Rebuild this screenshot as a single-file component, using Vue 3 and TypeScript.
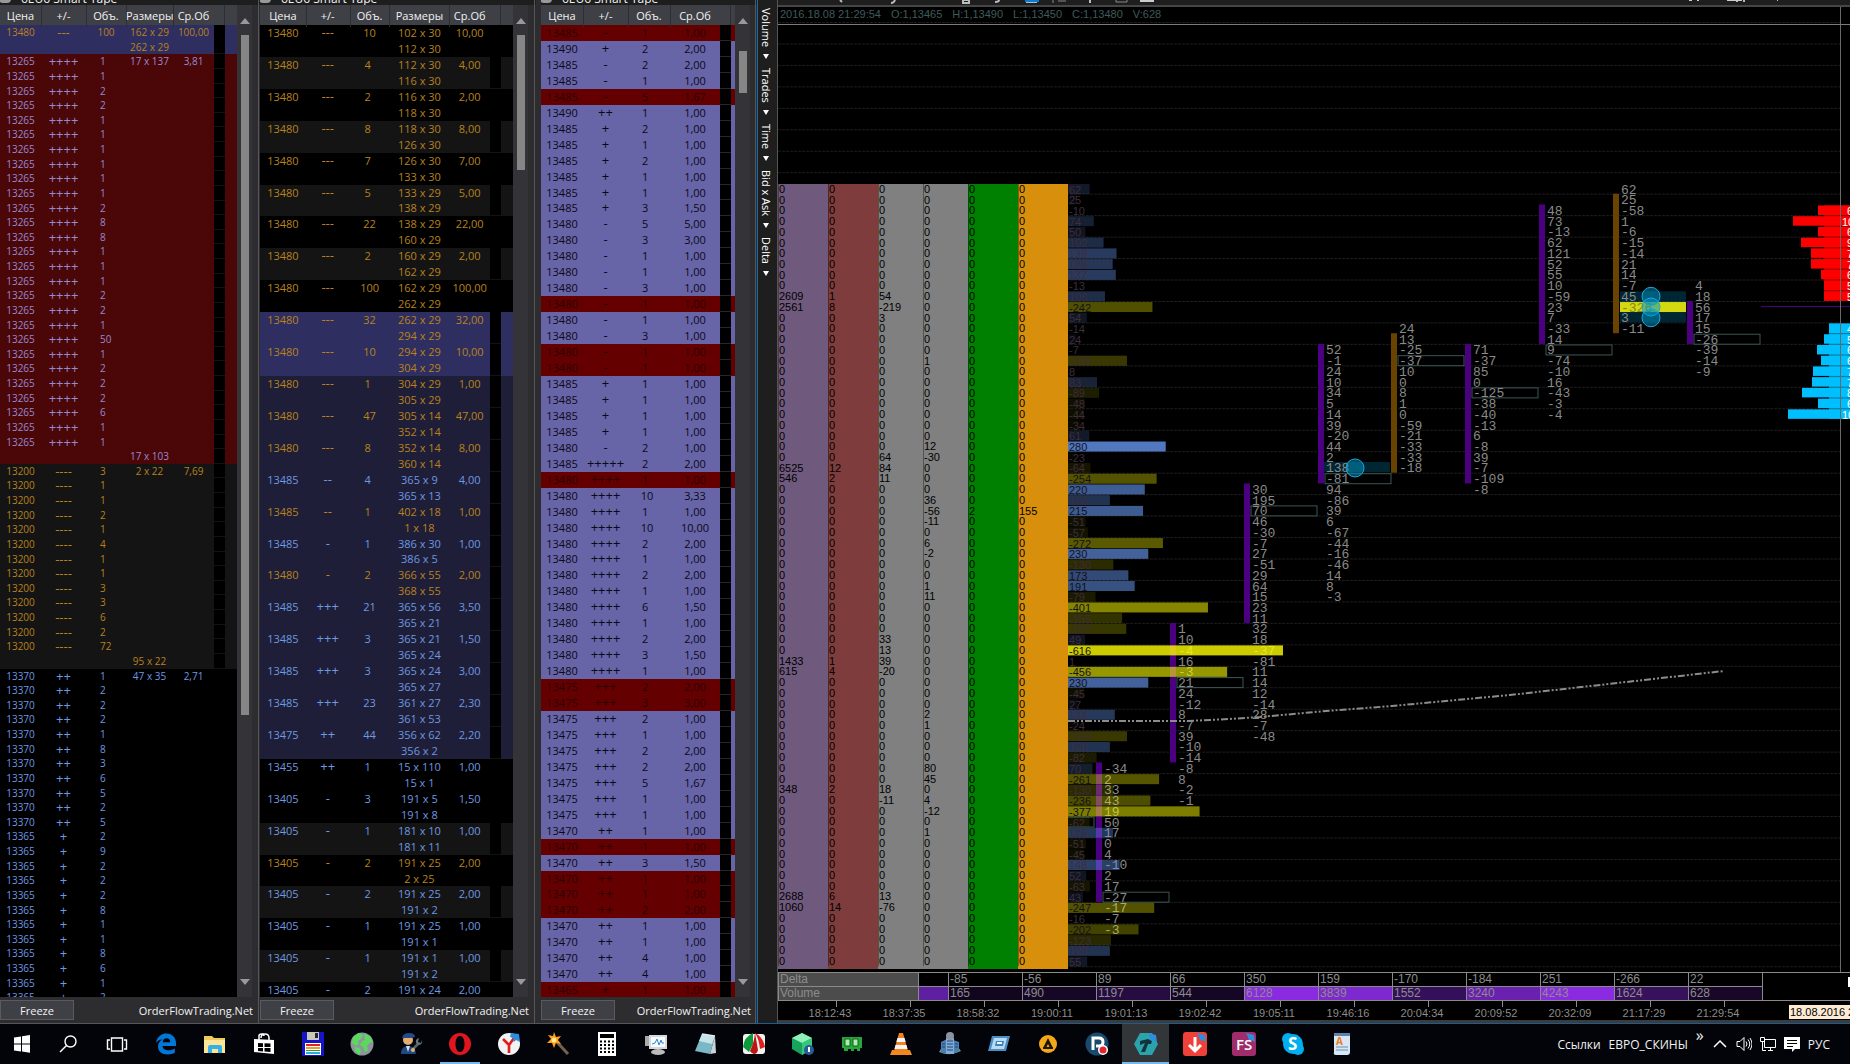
<script setup lang="ts">
interface Row { price: string; sign: string; vol: string; size: string; avg: string; tone: string; fill: string }
interface Tape { id: string; heads: string[]; sizes: boolean; rows: Row[]; thumbTop: number; thumbHeight: number }

const title = '6EU6 Smart Tape'

function block(price: string, sign: string, vols: string, first: string, avg: string, last: string, tone: string, fill: string): Row[] {
  const rows = vols.split(' ').map((vol, i) => ({
    price, sign, vol, size: i === 0 ? first : '', avg: i === 0 ? avg : '', tone, fill,
  }))
  if (last) rows.push({ price: '', sign: '', vol: '', size: last, avg: '', tone, fill })
  return rows
}

const groupedRows: Row[] = [
  { price: '13480', sign: '---', vol: '100', size: '162 x 29\n262 x 29', avg: '100,00', tone: 'sell', fill: 'navy' },
  ...block('13265', '++++', '1 1 2 2 1 1 1 1 1 1 2 8 8 1 1 1 2 2 1 50 1 2 2 2 6 1 1', '17 x 137', '3,81', '17 x 103', 'violet', 'maroon'),
  ...block('13200', '----', '3 1 1 2 1 4 1 1 3 3 6 2 72', '2 x 22', '7,69', '95 x 22', 'sell', 'dark'),
  ...block('13370', '++', '1 2 2 2 1 8 3 6 5 2 5', '47 x 35', '2,71', '', 'buy', 'black'),
  ...block('13365', '+', '2 9 2 2 2 8 1 1 8 6 1 2', '', '', '', 'buy', 'black'),
]

const pairedSource = `13480|---|10|102 x 30|112 x 30|10,00|sell|black
13480|---|4|112 x 30|116 x 30|4,00|sell|dark
13480|---|2|116 x 30|118 x 30|2,00|sell|black
13480|---|8|118 x 30|126 x 30|8,00|sell|dark
13480|---|7|126 x 30|133 x 30|7,00|sell|black
13480|---|5|133 x 29|138 x 29|5,00|sell|dark
13480|---|22|138 x 29|160 x 29|22,00|sell|black
13480|---|2|160 x 29|162 x 29|2,00|sell|dark
13480|---|100|162 x 29|262 x 29|100,00|sell|black
13480|---|32|262 x 29|294 x 29|32,00|sell|navy
13480|---|10|294 x 29|304 x 29|10,00|sell|navy
13480|---|1|304 x 29|305 x 29|1,00|sell|indigo
13480|---|47|305 x 14|352 x 14|47,00|sell|indigo
13480|---|8|352 x 14|360 x 14|8,00|sell|indigo
13485|--|4|365 x 9|365 x 13|4,00|buy|indigo
13485|--|1|402 x 18|1 x 18|1,00|sell|indigo
13485|-|1|386 x 30|386 x 5|1,00|buy|indigo
13480|-|2|366 x 55|368 x 55|2,00|sell|indigo
13485|+++|21|365 x 56|365 x 21|3,50|buy|indigo
13485|+++|3|365 x 21|365 x 24|1,50|buy|indigo
13485|+++|3|365 x 24|365 x 27|3,00|buy|indigo
13485|+++|23|361 x 27|361 x 53|2,30|buy|indigo
13475|++|44|356 x 62|356 x 2|2,20|buy|indigo
13455|++|1|15 x 110|15 x 1|1,00|buy|black
13405|-|3|191 x 5|191 x 8|1,50|buy|black
13405|-|1|181 x 10|181 x 11|1,00|buy|dark
13405|-|2|191 x 25|2 x 25|2,00|sell|black
13405|-|2|191 x 25|191 x 2|2,00|buy|dark
13405|-|1|191 x 25|191 x 1|1,00|buy|black
13405|-|1|191 x 1|191 x 2|1,00|buy|dark
13405|-|2|191 x 24||2,00|buy|black`

const pairedRows: Row[] = pairedSource.split('\n').map((line) => {
  const [price, sign, vol, a, b, avg, tone, fill] = line.split('|')
  return { price, sign, vol, size: b ? a + '\n' + b : a, avg, tone, fill }
})

// price, sign, volume, average; a trailing r marks a sell print
const singleSource = `13485 - 1 1,00 r;13490 + 2 2,00;13485 - 2 2,00;13485 - 1 1,00;13485 - 5 1,67 r;13490 ++ 1 1,00;13485 + 2 1,00;13485 + 1 1,00;13485 + 2 1,00;13485 + 1 1,00;13485 + 1 1,00;13485 + 3 1,50;13480 - 5 5,00;13480 - 3 3,00;13480 - 1 1,00;13480 - 1 1,00;13480 - 3 1,00;13480 - 1 1,00 r;13480 - 1 1,00;13480 - 3 1,00;13480 - 1 1,00 r;13480 - 1 1,00 r;13485 + 1 1,00;13485 + 1 1,00;13485 + 1 1,00;13485 + 1 1,00;13480 - 2 1,00;13485 +++++ 2 2,00;13480 ++++ 1 1,00 r;13480 ++++ 10 3,33;13480 ++++ 1 1,00;13480 ++++ 10 10,00;13480 ++++ 2 2,00;13480 ++++ 1 1,00;13480 ++++ 2 2,00;13480 ++++ 1 1,00;13480 ++++ 6 1,50;13480 ++++ 1 1,00;13480 ++++ 2 2,00;13480 ++++ 3 1,50;13480 ++++ 1 1,00;13475 +++ 2 2,00 r;13475 +++ 3 3,00 r;13475 +++ 2 1,00;13475 +++ 1 1,00;13475 +++ 2 2,00;13475 +++ 2 2,00;13475 +++ 5 1,67;13475 +++ 1 1,00;13475 +++ 1 1,00;13470 ++ 1 1,00;13470 ++ 1 1,00 r;13470 ++ 3 1,50;13470 ++ 1 1,00 r;13470 ++ 1 1,00 r;13470 ++ 2 2,00 r;13470 ++ 1 1,00;13470 ++ 1 1,00;13470 ++ 4 1,00;13470 ++ 4 1,00;13465 + 1 1,00 r`

const singleRows: Row[] = singleSource.split(';').map((entry) => {
  const [price, sign, vol, avg, mark] = entry.split(' ')
  return { price, sign, vol, size: '', avg, tone: mark ? 'ember' : 'ink', fill: mark ? 'red' : 'lilac' }
})

const tapes: Tape[] = [
  { id: 'grouped', heads: ['Цена', '+/-', 'Объ.', 'Размеры', 'Ср.Об'], sizes: true, rows: groupedRows, thumbTop: 0, thumbHeight: 73 },
  { id: 'paired', heads: ['Цена', '+/-', 'Объ.', 'Размеры', 'Ср.Об'], sizes: true, rows: pairedRows, thumbTop: 0, thumbHeight: 14.5 },
  { id: 'single', heads: ['Цена', '+/-', 'Объ.', 'Ср.Об'], sizes: false, rows: singleRows, thumbTop: 1.7, thumbHeight: 4.5 },
]

const menus = ['Volume', 'Trades', 'Time', 'Bid x Ask', 'Delta']
const quote = ['2016.18.08 21:29:54', 'O:1,13465', 'H:1,13490', 'L:1,13450', 'C:1,13480', 'V:628']

// Price ladder: 73 levels, drawn from the top of the plot
const LEVELS = 73
const PITCH = 10.73
const TOP = 177
const levelY = (level: number) => TOP + level * PITCH
const baseline = (level: number) => levelY(level) + 9.5

const ladder: Record<number, string>[] = [
  { 10: '2609', 11: '2561', 26: '6525', 27: '546', 44: '1433', 45: '615', 56: '348', 66: '2688', 67: '1060' },
  { 10: '1', 11: '8', 26: '12', 27: '2', 44: '1', 45: '4', 56: '2', 66: '6', 67: '14' },
  { 10: '54', 11: '-219', 12: '3', 25: '64', 26: '84', 27: '11', 42: '33', 43: '13', 44: '39', 45: '-20', 56: '18', 57: '-11', 66: '13', 67: '-76' },
  { 16: '1', 24: '12', 25: '-30', 29: '36', 30: '-56', 31: '-11', 33: '6', 34: '-2', 37: '1', 38: '11', 49: '2', 50: '1', 54: '80', 55: '45', 57: '4', 58: '-12', 60: '1' },
  { 30: '2' },
  { 30: '155' },
]
const levels = Array.from({ length: LEVELS }, (_, i) => i)
const gridLines = Array.from({ length: 45 }, (_, i) => 15.5 + i * PITCH * 2)

const profile = [
  62, 25, -10, 74, 50, 102, 139, 128, 137, -13, 106, -242, 54, -14, 24, -7, -169, 8, 83, -89, -48, -44, -34, 61, 280,
  -23, -64, -254, 220, 120, 215, -51, -57, -272, 230, -130, 173, 191, -79, -401, -155, -167, 49, -616, 1, -456, 230,
  -45, 27, 134, -24, -169, 120, -82, 70, -261, -130, -236, -377, -62, 129, -51, -45, 148, 52, -63, 43, -247, -16,
  -202, -123, 120, 55,
]
const barOpacity = (v: number) => (v > 0 ? v / 280 : -v / 616) * 0.8
const barInk = (v: number) => (Math.abs(v) >= 170 ? '#14101a' : '#3f2c3c')

interface Candle { x: number; from: number; count: number; up: boolean; start: number; box: number; cells: number[] }
const candles: Candle[] = [
  { x: 318, from: 54, count: 13, up: false, start: 54, box: 66, cells: [-34, 2, 33, 43, 19, 50, 17, 0, 4, -10, 2, 17, -27, -17, -7, -3] },
  { x: 392, from: 41, count: 13, up: false, start: 41, box: 46, cells: [1, 10, -4, 16, -3, 21, 24, -12, 8, -7, 39, -10, -14, -8, 8, -2, -1] },
  { x: 466, from: 28, count: 13, up: false, start: 28, box: 30, cells: [30, 195, 70, 46, -30, -7, 27, -51, 29, 64, 15, 23, 11, 32, 18, -37, -81, 11, 14, 12, -14, 28, -7, -48] },
  { x: 540, from: 15, count: 13, up: false, start: 15, box: 27, cells: [52, -1, 24, 10, 34, 5, 14, 39, -20, 44, 2, 138, -81, 94, -86, 39, 6, -67, -44, -16, -46, 14, 8, -3] },
  { x: 613, from: 14, count: 13, up: true, start: 13, box: 16, cells: [24, 13, -25, -37, 10, 0, 8, 1, 0, -59, -21, -33, -33, -18] },
  { x: 687, from: 15, count: 13, up: false, start: 15, box: 19, cells: [71, -37, 85, 0, -125, -38, -40, -13, 6, -8, 39, -7, -109, -8] },
  { x: 761, from: 2, count: 13, up: false, start: 2, box: 15, cells: [48, 73, -13, 62, 121, 52, 55, 10, -59, 23, 7, -33, 14, 9, -74, -10, 16, -43, -3, -4] },
  { x: 835, from: 1, count: 13, up: true, start: 0, box: -1, cells: [62, 25, -58, 1, -6, -15, -14, 21, 14, -7, 45, -326, 3, -11] },
  { x: 909, from: 11, count: 4, up: false, start: 9, box: 14, cells: [4, 18, 56, 17, 15, -26, -39, -14, -9] },
]

const asks = [[1040, '6'], [1015, '10'], [1040, '6'], [1023, '9'], [1033, '7'], [1033, '7'], [1043, '6'], [1046, '5'], [1046, '5']] as [number, string][]
const bids = [[1051, '4'], [1046, '5'], [1039, '6'], [1043, '6'], [1035, '7'], [1034, '7'], [1024, '8'], [1040, '6'], [1010, '10']] as [number, string][]
const depthX = (label: string) => (label.length > 1 ? 1064 : 1069)

const deltas = ['', '-85', '-56', '89', '66', '350', '159', '-170', '-184', '251', '-266', '22']
const volumes = ['', '165', '490', '1197', '544', '6128', '3839', '1552', '3240', '4243', '1624', '628']
const heat = ['#5e1fa0', '#12051e', '#170726', '#260c40', '#160626', '#8a2be2', '#7e28cf', '#35105a', '#6a21b0', '#8a2be2', '#37115c', '#180728']
const times = ['18:12:43', '18:37:35', '18:58:32', '19:00:11', '19:01:13', '19:02:42', '19:05:11', '19:46:16', '20:04:34', '20:09:52', '20:32:09', '21:17:29', '21:29:54']
</script>

<template>
  <div class="desktop">
    <main class="workspace">
      <section v-for="tape in tapes" :key="tape.id" class="tape" :class="tape.id">
        <header class="tape-title">
          <svg width="14" height="14" viewBox="0 0 14 14" aria-hidden="true"><rect x="1" y="2" width="12" height="11" rx="4" fill="#999" /></svg>
          <span>{{ title }}</span>
        </header>
        <div class="tape-main">
          <table>
            <thead>
              <tr>
                <th v-for="(head, i) in tape.heads" :key="head" scope="col" :class="{ wide: i === tape.heads.length - 1 }">{{ head }}</th>
                <td class="rest"></td>
              </tr>
            </thead>
            <tbody>
              <tr v-for="(row, i) in tape.rows" :key="i" :class="[row.fill, row.tone]">
                <td>{{ row.price }}</td>
                <td class="sign">{{ row.sign }}</td>
                <td class="vol"><span>{{ row.vol }}</span></td>
                <td v-if="tape.sizes" class="size">{{ row.size }}</td>
                <td>{{ row.avg }}</td>
                <td class="strip"></td>
                <td></td>
              </tr>
            </tbody>
          </table>
          <div class="scrollbar">
            <svg width="10" height="6" viewBox="0 0 10 6" aria-hidden="true"><path d="M0 6 5 0l5 6z" fill="#999" /></svg>
            <div class="track">
              <div class="thumb" :style="{ marginTop: tape.thumbTop + 'cqh', height: tape.thumbHeight + '%' }"></div>
            </div>
            <svg width="10" height="6" viewBox="0 0 10 6" aria-hidden="true"><path d="M0 0h10L5 6z" fill="#999" /></svg>
          </div>
        </div>
        <footer class="tape-foot">
          <button type="button">Freeze</button>
          <span>OrderFlowTrading.Net</span>
        </footer>
      </section>

      <section class="chart">
        <nav class="side">
          <button v-for="menu in menus" :key="menu" type="button">
            {{ menu }}
            <svg width="6" height="6" viewBox="0 0 6 6" aria-hidden="true"><path d="M0 1h6L3 6z" fill="#fff" /></svg>
          </button>
        </nav>
        <div class="view">
          <div class="toolbar">
            <svg width="1000" height="5" viewBox="0 0 1000 5" aria-hidden="true">
              <path d="M62 0l2 2M113 3q3 0 4-3M185 0h6v3h-6zM217 2q4 0 4-2M249 0v2h10M312 0v3M959 0v2M966 0v2M1000 0v1" fill="none" stroke="#bbb" stroke-width="2" />
              <rect x="247" y="0" width="14" height="2" fill="#0a7cd4" />
              <path d="M275 0v3M280 1h8M338 0v2h11V0" fill="none" stroke="#888" />
              <rect x="362" y="0" width="14" height="2" fill="#ccc" />
              <path d="M949 0h15v1h-15zM911 0h3v1h-3zM919 0h2v1h-2z" fill="#ccc" />
            </svg>
          </div>
          <div class="plot">
            <svg class="canvas" width="100%" height="100%" role="img" aria-label="Delta chart">
              <line v-for="y in gridLines" :key="y" x1="0" x2="1062" :y1="y" :y2="y" class="grid" />
              <rect x="546" :y="levelY(26) - 1" width="66" height="10" class="glow" />
              <rect x="842" :y="levelY(10)" width="66" height="31" class="glow" />
              <rect x="842" :y="levelY(11)" width="66" height="10" fill="#d4d810" />
              <rect x="250" :y="levelY(59)" width="66" height="10" class="poc" />
              <g v-for="c in candles" :key="c.x">
                <rect :x="c.x" :y="levelY(c.from) - 1" width="6" :height="c.count * PITCH" :fill="c.up ? '#6b4300' : '#4b0082'" />
                <rect v-if="c.box >= 0" :x="c.x + 7" :y="levelY(c.box)" width="66" height="10" class="poc" />
                <text v-for="(v, i) in c.cells" :key="i" :x="c.x + 8" :y="baseline(c.start + i)" class="cell" :class="{ dim: v === -326 }">{{ v }}</text>
              </g>
              <circle cx="577" :cy="levelY(26) + 5" r="9" class="spot" />
              <circle v-for="n in [10, 11, 12]" :key="n" cx="873" :cy="levelY(n) + 5" r="9" class="spot" />
              <g v-for="(v, i) in profile" :key="i">
                <rect x="290" :y="levelY(i)" :width="Math.abs(v) * 0.349" height="10" :fill="v > 0 ? '#6595ed' : '#ffff00'" :fill-opacity="barOpacity(v)" />
                <text x="291" :y="baseline(i)" class="profile" :fill="barInk(v)">{{ v }}</text>
              </g>
              <path d="M290 714H410L452 712 482 710 548 704 614 699 732 688 866 673 946 664" class="average" />
              <line x1="983" x2="1100" y1="299.5" y2="299.5" stroke="#4b0082" />
              <rect x="1046" :y="levelY(2)" width="80" :height="9 * PITCH - 1" fill="#a00000" />
              <rect x="1051" :y="levelY(13)" width="80" :height="9 * PITCH - 1" fill="#007fa8" />
              <rect v-for="([x], i) in asks" :key="'a' + i" :x="x" :y="levelY(2 + i)" width="100" height="9.500" fill="#f00" />
              <rect v-for="([x], i) in bids" :key="'b' + i" :x="x" :y="levelY(13 + i)" width="100" height="9.500" fill="#00bfff" />
              <line x1="1062.5" x2="1062.5" y1="0" y2="100%" stroke="#696969" />
              <text v-for="([, label], i) in asks" :key="'c' + i" :x="depthX(label)" :y="baseline(2 + i)" class="depth">{{ label }}</text>
              <text v-for="([, label], i) in bids" :key="'d' + i" :x="depthX(label)" :y="baseline(13 + i)" class="depth">{{ label }}</text>
            </svg>
            <div class="overlay">
              <div class="quote"><span v-for="q in quote" :key="q">{{ q }}</span></div>
              <table class="ladder">
                <tbody>
                  <tr v-for="n in levels" :key="n">
                    <td v-for="(col, i) in ladder" :key="i">{{ col[n] ?? '0' }}</td>
                  </tr>
                </tbody>
              </table>
            </div>
          </div>
          <div class="totals">
            <table>
              <tbody>
                <tr>
                  <th scope="row">Delta</th>
                  <td v-for="(d, i) in deltas" :key="i">{{ d }}</td>
                </tr>
                <tr>
                  <th scope="row">Volume</th>
                  <td v-for="(v, i) in volumes" :key="i" :style="{ background: heat[i] }">{{ v }}</td>
                </tr>
              </tbody>
            </table>
            <div class="edge"><i></i></div>
          </div>
          <div class="axis">
            <div v-for="t in times" :key="t" class="time"><i></i><span>{{ t }}</span></div>
            <div class="stamp">18.08.2016 21:30</div>
          </div>
        </div>
      </section>
    </main>

    <nav class="taskbar">
      <button type="button" class="start" aria-label="Start"><svg viewBox="0 0 24 24"><path d="M4 5.500l7-1v7H4zM12 4.300l8-1.200v8.400h-8zM4 12.500h7v7l-7-1zM12 12.500h8v8.300l-8-1.200z" fill="#fff" /></svg></button>
      <button type="button" aria-label="Search"><svg viewBox="0 0 24 24" fill="none" stroke="#fff" stroke-width="1.400"><circle cx="14.500" cy="9.500" r="5.500" /><path d="M10.500 13.500 4 20" /></svg></button>
      <button type="button" aria-label="Task view"><svg viewBox="0 0 24 24" fill="none" stroke="#fff" stroke-width="1.400"><path d="M6.500 6h11v13h-11zM5 8H2.500v9H5M19 8h2.500v9H19" /></svg></button>
      <button type="button" aria-label="Edge"><svg viewBox="0 0 24 24"><path d="M2 11C3 4 8 1.500 12.500 1.500 18.500 1.500 22 6 22 11v3H8.500c.2 3 3 4.300 6 4.300 2.500 0 4.500-.7 6.300-1.800v4.300c-2 1.200-4.500 1.700-7 1.700C7.500 22.500 4 19 4 14.500c0-3 1.500-5.500 4.500-7C5.500 7.500 3.500 9 2 11zm6.700-.8h7.600c0-2.500-1.500-3.900-3.700-3.900-2.300 0-3.700 1.500-3.900 3.900z" fill="#0078d7" /></svg></button>
      <button type="button" aria-label="Explorer"><svg viewBox="0 0 24 24"><path d="M1 4h8l2 2h11v15H1z" fill="#eecb5c" /><path d="M1 8h21v13H1z" fill="#fbe596" /><path d="M5 21v-6q0-2 2-2h10q2 0 2 2v6h-4v-4H9v4z" fill="#35b0e8" /></svg></button>
      <button type="button" aria-label="Store"><svg viewBox="0 0 24 24"><path d="M7 8V4q0-2 2.500-2T12 4M9 6q0-4 4-4t4 4v2" fill="none" stroke="#fff" stroke-width="1.500" /><path d="M2 7l20 1v14L2 20z" fill="#fff" /><path d="M6 11l5 .2V15H6zM12.500 11.300l6 .3V15h-6zM6 16h5v3.500L6 19zM12.500 16h6v4l-6-.4z" fill="#000" /></svg></button>
      <button type="button" aria-label="Total Commander"><svg viewBox="0 0 24 24"><path d="M1 0h22v24H2l-1-1z" fill="#1414c8" /><path d="M6 0h12v8H6z" fill="#c8c8b8" /><path d="M14 1h3v5h-3z" fill="#223" /><path d="M4 11h16v12H4z" fill="#fff" /><path d="M5 12h14v2H5z" fill="#e02020" /><path d="M5 15h14v2H5z" fill="#e8a020" /><path d="M5 18h14v1H5z" fill="#20a040" /><path d="M5 20h14v2H5z" fill="#30a8d8" /></svg></button>
      <button type="button" aria-label="Globe"><svg viewBox="0 0 24 24"><circle cx="12" cy="12" r="11.500" fill="#8d959c" /><path d="M3 5l6-4 4 2-2 4-3 2 1 3-3 2-4-3zM14 2l6 2 3 6-4 1-2 3 1 4-3 2-2-5-3-2 2-4 3-1zM5 15l5 1 1 4-2 3-4-4z" fill="#5cd860" /></svg></button>
      <button type="button" aria-label="Repair"><svg viewBox="0 0 24 24"><circle cx="9" cy="8" r="5" fill="#e6ad72" /><path d="M3 6q1-5 7-5t6 4l-4 1z" fill="#234b8c" /><path d="M2 22q0-8 7-8t8 8z" fill="#1d4a85" /><path d="M7 14h4l-2 6z" fill="#d5e2ee" /><path d="M12 19l7-7" stroke="#59636d" stroke-width="2.500" /><path d="M17 11q-1-4 3-5l-1 4 3 1 1-3q1 5-4 5z" fill="#69747e" /><circle cx="14" cy="18" r="2" fill="#e6ad72" /></svg></button>
      <button type="button" class="running" aria-label="Opera"><svg viewBox="0 0 24 24"><path fill-rule="evenodd" d="M12 1a11 11 0 1 0 0 22 11 11 0 0 0 0-22zm0 3c2.800 0 4.500 3.500 4.500 8s-1.700 8-4.500 8-4.500-3.500-4.500-8S9.200 4 12 4z" fill="#e0161e" /></svg></button>
      <button type="button" aria-label="Yandex"><svg viewBox="0 0 24 24"><circle cx="12" cy="12" r="11" fill="#f3f3f3" /><path d="M6 7l6 6 5-7M12 13v8" fill="none" stroke="#e01c1c" stroke-width="2.600" /><path d="M14 1l8 1 1 8-4-2-2 2-1-4-3-1z" fill="#2f8ddb" /></svg></button>
      <button type="button" aria-label="Wand"><svg viewBox="0 0 24 24"><path d="M10 9l12 13" stroke="#75604b" stroke-width="3" /><path d="M8 0l2 5 5-1-3 4 3 4-5-1-2 5-2-5-5 0 4-4-3-4 5 1z" fill="#ff9e1a" /><circle cx="8" cy="8" r="2.500" fill="#ffe990" /></svg></button>
      <button type="button" aria-label="Calculator"><svg viewBox="0 0 24 24"><path d="M3 0h18v24H3z" fill="#fff" /><path d="M5 2h14v4H5z" fill="#000" /><path d="M5 9.500h14M5 13h14M5 16.500h14M5 20h14" stroke="#000" stroke-width="1.800" stroke-dasharray="2 2" /></svg></button>
      <button type="button" aria-label="Monitor"><svg viewBox="0 0 24 24"><path d="M1 4h12v10H1z" fill="#aaa" /><path d="M5 3h18v14H5z" fill="#d6d8da" /><path d="M7 5h14v10H7z" fill="#f7fbff" /><path d="M8 12l3-1 2-4 2 6 2-5 1 3h2" fill="none" stroke="#2c86c8" /><ellipse cx="14" cy="20" rx="7" ry="3" fill="#b9bbbd" /></svg></button>
      <button type="button" aria-label="Notepad"><svg viewBox="0 0 24 24"><path d="M9 2l13 2-5 18-15-3z" fill="#79b8c4" /><path d="M9 2l13 2-3 8-13-3z" fill="#c4e4ea" /><path d="M22 4l1 17-6 1z" fill="#c9d3d8" /><path d="M9 2l13 2" stroke="#e8e8e8" stroke-width="1.500" /></svg></button>
      <button type="button" aria-label="Umbrella"><svg viewBox="0 0 24 24"><rect x="1" y="2" width="22" height="20" rx="3" fill="#f2f2f2" /><path d="M11 1Q2 5 1 15l6 5 4-8z" fill="#0c9a3e" /><path d="M13 1l3 17q-1 4-4 4-3-1-4-3 4-8 5-18z" fill="#c01414" /><path d="M13 1q8 4 10 14l-5 2q-1-10-5-16z" fill="#e02020" /></svg></button>
      <button type="button" aria-label="Cube"><svg viewBox="0 0 24 24"><path d="M11 1l10 5v11l-10 6L1 17V6z" fill="#17a35c" /><path d="M11 1l10 5-10 5L1 6z" fill="#8ff0b8" /><path d="M11 11l10-5v11l-10 6z" fill="#36c77c" /><circle cx="18" cy="18" r="5" fill="#2a5a9a" /><path d="M18 15v5" stroke="#fff" stroke-width="2" /></svg></button>
      <button type="button" aria-label="Memory"><svg viewBox="0 0 24 24"><path d="M2 5h20v11h-2v3h-3v-2h-3v2h-3v-2H8v2H4v-3H2z" fill="#25a83b" /><path d="M5 7h5v7H5zM13 7h5v7h-5z" fill="#b7e8b0" stroke="#0c661d" /></svg></button>
      <button type="button" aria-label="VLC"><svg viewBox="0 0 24 24"><path d="M3 18h18l2 5H1z" fill="#f08a1d" /><path d="M10 1h4l5 18q-7 3-14 0z" fill="#f58220" /><path d="M8.500 6h7l1.200 4H7.300zM6.500 13h11l1 4H5.500z" fill="#f6f6f6" /></svg></button>
      <button type="button" aria-label="Buildings"><svg viewBox="0 0 24 24"><path d="M1 20q11 5 22-1l-3-4H4z" fill="#5e9e78" /><path d="M3 10l6-3v14H3zM15 8l6 2v9l-6 3z" fill="#4c7eb5" /><path d="M8 6h8v16H8z" fill="#80acd8" /><path d="M9 9h6M9 12h6M9 15h6M9 18h6M4 12h3M4 15h3M17 12h3M17 15h3" stroke="#1e4472" /><circle cx="12" cy="4" r="4" fill="#8a949e" /></svg></button>
      <button type="button" aria-label="Frame"><svg viewBox="0 0 24 24"><path d="M5 4h18l-4 15H1z" fill="#4c8ec4" /><path d="M7 6h13l-3 11H4z" fill="#b6dbf3" /><path d="M9 9h8l-1 5H8z" fill="#3f83bb" /><path d="M10 11h5" stroke="#e9f6ff" stroke-width="2" /></svg></button>
      <button type="button" aria-label="Aimp"><svg viewBox="0 0 24 24"><circle cx="12" cy="12" r="9" fill="#f5a817" /><path d="M12 6l5 10h-3l-2-4-2 4H7z" fill="#1c1608" /><path d="M7 16h10" stroke="#1c1608" stroke-width="2" /></svg></button>
      <button type="button" aria-label="Punto"><svg viewBox="0 0 24 24"><ellipse cx="12" cy="12" rx="11.500" ry="11.500" fill="#174a6e" /><path d="M8 18V6h6q4 0 4 4t-4 4h-3" fill="none" stroke="#fff" stroke-width="3" /><circle cx="18" cy="18" r="5" fill="#fff" /><circle cx="18" cy="18" r="3.500" fill="#e0262a" /></svg></button>
      <button type="button" class="active" aria-label="Trading platform"><svg viewBox="0 0 24 24"><path d="M6 1h12l6 11-6 11H6L0 12z" fill="#2aa3ad" /><path d="M6 9l8-2 4 2-1 3h-3l-3 8H7l4-9-5 2z" fill="#12343a" /><path d="M14 1l8 2 1 7-4-2-2 1-1-4z" fill="#2f8ddb" /></svg></button>
      <button type="button" aria-label="Downloader"><svg viewBox="0 0 24 24"><rect y="0" width="24" height="24" rx="3" fill="#f0403a" /><path d="M12 5v13M6 13l6 6 6-6" fill="none" stroke="#fff" stroke-width="3" /><path d="M14 1l8 2 1 7-4-2-2 1-1-4z" fill="#2f8ddb" /></svg></button>
      <button type="button" class="fs" aria-label="FS"><svg viewBox="0 0 24 24"><rect width="24" height="24" rx="3" fill="#a02c6b" /><path d="M14 1l8 2 1 7-4-2-2 1-1-4z" fill="#2f8ddb" /><text x="4" y="18" font-size="15" font-weight="600" fill="#fff">FS</text></svg></button>
      <button type="button" class="fs" aria-label="Skype"><svg viewBox="0 0 24 24"><circle cx="12" cy="12" r="10" fill="#00aff0" /><circle cx="7" cy="7" r="6" fill="#00aff0" /><circle cx="17" cy="17" r="6" fill="#00aff0" /><text x="7" y="18" font-size="17" font-weight="700" fill="#fff">S</text></svg></button>
      <button type="button" class="fs" aria-label="WordPad"><svg viewBox="0 0 24 24"><path d="M4 2h16v18q0 3-3 3H6q-3 0-2-3z" fill="#d7e7f5" /><path d="M4 1h16v3H4z" fill="#5c83a8" /><path d="M6 15h12M6 18h12" stroke="#6b8fb0" /><text x="6" y="13" font-size="10" font-weight="700" fill="#f07818">A</text></svg></button>

      <div class="tray">
        <a href="#links">Ссылки</a>
        <a href="#skins">ЕВРО_СКИНЫ</a>
        <button type="button" class="more" aria-label="More">»</button>
        <button type="button" aria-label="Hidden icons"><svg viewBox="0 0 16 16" fill="none" stroke="#fff" stroke-width="1.500"><path d="M2 11l6-6 6 6" /></svg></button>
        <button type="button" aria-label="Sound"><svg viewBox="0 0 16 16" fill="none" stroke="#fff"><path d="M1 5.500h3l4-4v13l-4-4H1zM10 5.500q2 2.500 0 5M12 3.500q3.500 4.500 0 9M14 2q4 6 0 12" /></svg></button>
        <button type="button" aria-label="Network"><svg viewBox="0 0 16 16" fill="none" stroke="#fff"><path d="M4.500 3.500h11v8h-11zM8 14.500h5M10.500 12v2M.5 1.500h4v4h-4zM2.500 6v8.500H6" /></svg></button>
        <button type="button" aria-label="Notifications"><svg viewBox="0 0 16 16"><path d="M0 1h16v12h-5l-3 3v-3H0z" fill="#fff" /><path d="M3 4.500h10M3 7.500h10M3 10.500h6" stroke="#000" /></svg></button>
        <span>РУС</span>
      </div>
    </nav>
  </div>
</template>

<style>
html, body { margin: 0; background: #000; }
</style>

<style scoped>
.desktop { height: 100vh; display: flex; flex-direction: column; overflow: hidden; background: #2d2d30; color: #f2f2f2; font-family: "Open Sans", "Noto Sans", sans-serif; font-size: 11px; }
button { font: inherit; color: inherit; border: 0; padding: 0; margin: 0; background: none; }
table { border-collapse: collapse; border-spacing: 0; }
.workspace { flex: 1; min-height: 0; display: grid; grid-template-columns: 260fr 276fr 221fr 1093fr; }

.tape { box-sizing: border-box; min-width: 0; display: flex; flex-direction: column; overflow: hidden; padding-right: 8px; background: #2d2d30; border-bottom: 1px solid #55555a; position: relative; }
.tape::after { content: ""; position: absolute; inset: 0 1px 0 auto; width: 1px; background: #55555a; }
.tape.single { padding-left: 5px; padding-right: 7px; }
.tape-title { height: 5px; display: flex; align-items: flex-end; gap: 9px; background: #1e1e1e; margin-right: -8px; overflow: hidden; font-size: 12px; line-height: 16px; }
.tape-title svg { flex: none; margin-left: -2px; margin-bottom: 1px; }
.tape-title span { margin-bottom: -2px; white-space: nowrap; }
.tape-main { flex: 1; min-height: 0; display: flex; }
.tape-main table { flex: 1; min-width: 0; display: block; overflow: hidden; background: #000; }
thead, .tape-main tbody { display: block; }
.tape-main tr { display: grid; text-align: center; }
.tape-main td, .tape-main th { padding: 0; white-space: pre; min-width: 0; }
.grouped tr { grid-template-columns: 41fr 45fr 40fr 47fr 41fr 11fr 12fr; }
.paired tr { grid-template-columns: 46fr 44fr 40fr 60fr 41fr 11fr 12fr; }
.single tr { grid-template-columns: 42fr 45fr 42fr 50fr 11fr 4fr; }
.tape-main thead tr { height: 20px; background: #3f4046; }
.tape-main th { font-weight: 400; line-height: 22px; box-shadow: 1px 0 #2d2e33; }
.tape-main th.wide { box-shadow: 10px 0 #3f4046, 11px 0 #2d2e33; }
.tape-main tbody { line-height: 1.451; }
.grouped tbody { font-size: 10px; line-height: 1.464; }
.tape-main .sign { font-size: 13px; line-height: 14px; }
.vol span { display: inline-block; min-width: 12px; text-align: left; }
.paired .vol span, .single .vol span { min-width: 10px; }
.single .vol span { padding-right: 4px; }
.strip { background: #000; border-bottom: 1px solid #131313; }
.black .strip { border-color: #000; }
.single .strip { border-color: #26262e; }
.navy { background: #2e2e60; }
.maroon { background: #4b0607; }
.dark { background: #141414; }
.black { background: #000; }
.indigo { background: #1e1e38; }
.red { background: #650000; }
.lilac { background: #6864a8; }
.sell { color: #b8821e; }
.buy { color: #6f98e0; }
.violet { color: #968ad0; }
.ink { color: #0a0a16; }
.ember { color: #2c0202; }
.scrollbar { flex: none; width: 15px; box-sizing: border-box; padding: 13px 0 12px; display: flex; flex-direction: column; align-items: center; background: #333338; }
.scrollbar > svg { flex: none; }
.track { flex: 1; width: 8px; margin: 11px 0 12px; container-type: size; }
.thumb { background: #868686; }
.tape-foot { height: 26px; display: flex; align-items: center; justify-content: space-between; white-space: nowrap; }
.tape-foot button { width: 74px; height: 20px; box-sizing: border-box; background: #3f3f46; border: 1px solid #5a5a60; }
.tape-foot span { margin-right: -1px; }

.chart { display: flex; min-width: 0; overflow: hidden; box-sizing: border-box; background: #1e1e1e; border-left: 1px solid #0e6cb4; border-bottom: 1px solid #1d5c90; }
.side { flex: none; width: 20px; box-sizing: border-box; padding: 8px 3px 0 0; border-right: 1px solid #555; display: flex; flex-direction: column; align-items: center; gap: 9px; color: #fff; }
.side button { writing-mode: vertical-rl; display: flex; align-items: center; gap: 6px; line-height: 16px; }
.view { flex: 1; min-width: 0; display: flex; flex-direction: column; background: #000; }
.toolbar { flex: none; height: 5px; background: #1e1e1e; border-bottom: 2px solid #464646; overflow: hidden; }
.toolbar svg { display: block; }
.plot { flex: 1; min-height: 0; display: grid; overflow: hidden; }
.canvas, .overlay { grid-area: 1 / 1; min-height: 0; }
.canvas { display: block; }
.overlay { display: flex; flex-direction: column; gap: 159px; font-family: "Liberation Sans", Arial, sans-serif; }
.quote { height: 17px; display: flex; gap: 10px; padding-left: 2px; line-height: 15px; color: #3e5b5b; border-bottom: 1px solid #7c7c7c; white-space: nowrap; }
.ladder { display: block; width: 290px; padding-bottom: 3px; color: #000; line-height: 0.9755; background: linear-gradient(90deg, #6f5a7d 50px, #7f3c3c 50px 100px, #808080 100px 190px, #008000 190px 240px, #d8900c 240px); }
.ladder tbody { display: block; }
.ladder tr { display: grid; grid-template-columns: 50px 50px 45px 45px 50px 50px; }
.ladder td { padding: 0 0 0 1px; box-shadow: inset 1px 0 rgba(0, 0, 0, 0.35); }
.grid { stroke: #1d1d1d; stroke-dasharray: 3 1; }
.poc { fill: none; stroke: #3a5856; }
.cell { font: 13px "Liberation Mono", "Courier New", monospace; fill: #8a8a8a; }
.cell.dim { fill: #85891c; }
.glow { fill: #00bfff; fill-opacity: 0.2; }
.spot { fill: #0096c8; fill-opacity: 0.5; stroke: #1aa8dc; }
.profile { font: 11px "Liberation Sans", Arial, sans-serif; }
.average { fill: none; stroke: #8c8c8c; stroke-width: 2; stroke-dasharray: 7 2 2 2 2 2; }
.depth { font: 11px "Liberation Sans", Arial, sans-serif; fill: #fff; }
.totals { flex: none; display: flex; font-family: "Liberation Sans", Arial, sans-serif; font-size: 12px; color: #8c8c8c; border-bottom: 1px solid #8a8a8a; }
.totals table { flex: none; width: 984px; table-layout: fixed; line-height: 13px; }
.totals th, .totals td { padding: 0 0 0 1px; width: 74px; height: 13px; box-sizing: border-box; border: 1px solid #8a8a8a; border-bottom: 0; font-weight: 400; text-align: left; }
.totals th { width: 140px; background: #4c4c4c; }
.totals th + td { width: 30px; }
.edge { flex: 1; border-top: 1px solid #8a8a8a; display: flex; justify-content: flex-end; }
.edge i { width: 2px; height: 10px; margin-top: 4px; background: #fff; }
.axis { flex: none; height: 19px; display: flex; padding-left: 21px; position: relative; border-bottom: 3px solid #3c3c3c; font-family: "Liberation Sans", Arial, sans-serif; color: #8c8c8c; }
.time { flex: none; width: 74px; display: flex; flex-direction: column; align-items: center; line-height: 12px; }
.time i { width: 1px; height: 6px; background: #8c8c8c; }
.time span { margin-right: 12px; }
.stamp { position: absolute; left: 1011px; top: 4px; padding: 0 1px; line-height: 14px; background: #fdebd3; color: #000; white-space: nowrap; }

.taskbar { flex: none; height: 40px; display: flex; background: #020409; font-size: 12px; white-space: nowrap; overflow: hidden; }
.taskbar > button { flex: none; width: 49px; display: flex; align-items: center; justify-content: center; }
.taskbar > button.start { width: 43px; }
.taskbar > button > svg { width: 24px; height: 24px; }
.running { background: linear-gradient(#76b9ed, #76b9ed) center bottom / 40px 2px no-repeat; }
.active { background: linear-gradient(#76b9ed, #76b9ed) center bottom / 47px 2px no-repeat, linear-gradient(#333638, #333638) center / 47px 100% no-repeat; }
.fs text { font-family: "Open Sans", "Noto Sans", sans-serif; }
.tray { margin-left: auto; display: flex; align-items: center; gap: 8px; padding-right: 20px; }
.tray a { color: inherit; text-decoration: none; }
.tray button { display: flex; }
.tray svg { width: 16px; height: 16px; }
.tray .more { font-size: 16px; align-self: flex-start; }
</style>
